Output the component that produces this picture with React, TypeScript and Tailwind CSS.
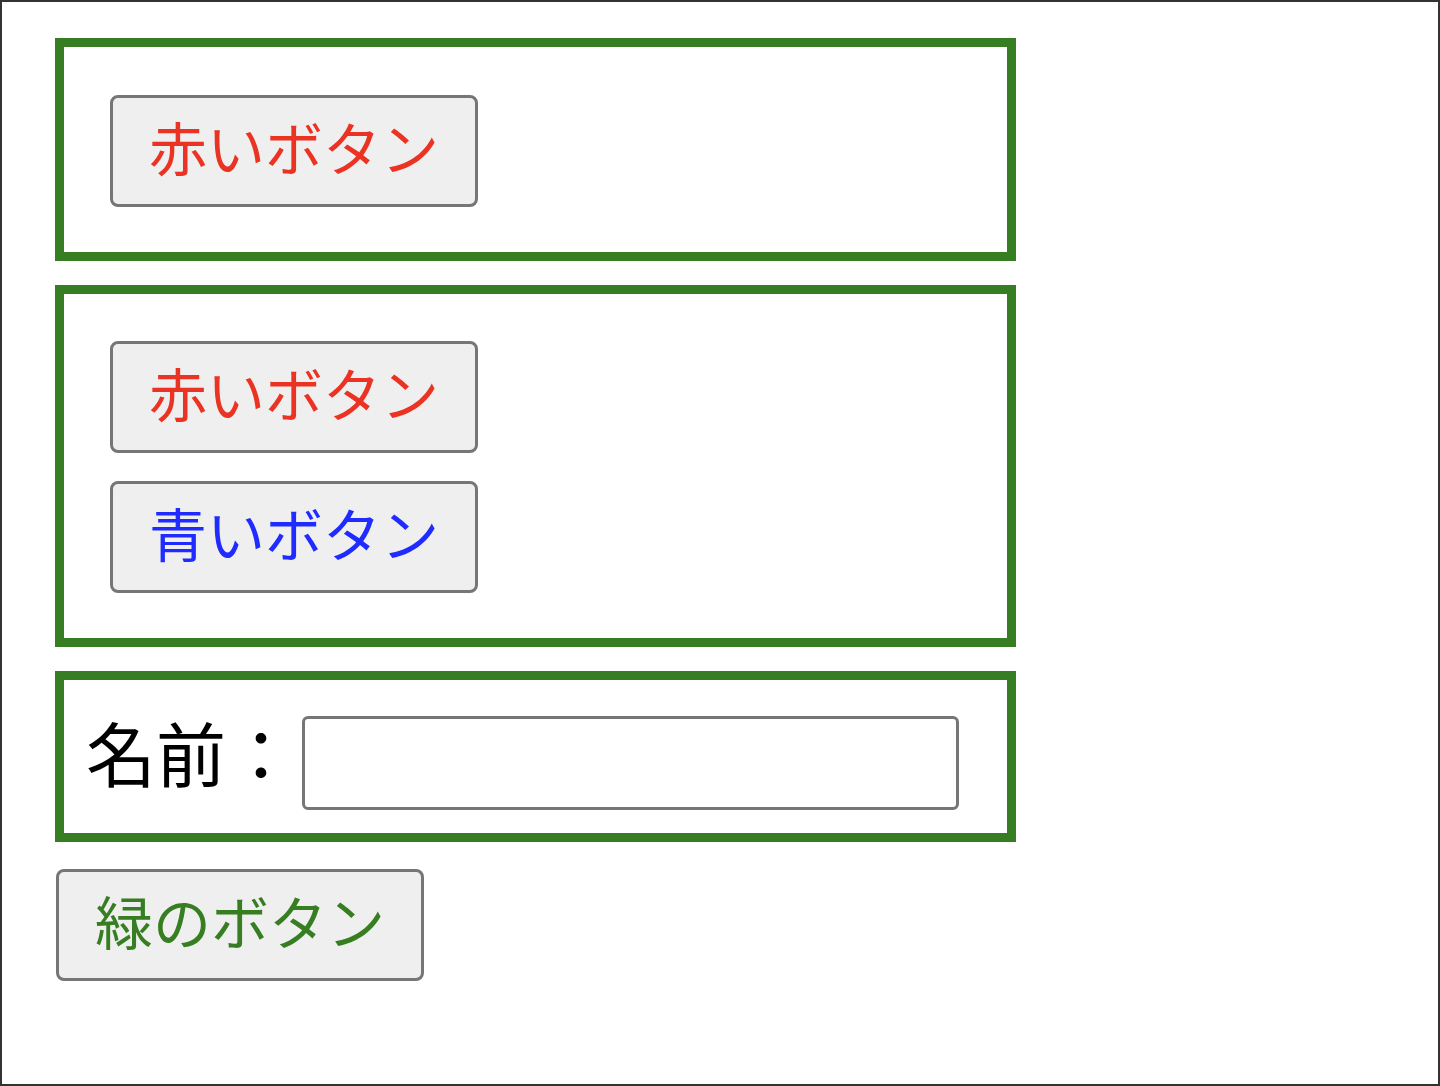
import React from "react";

const font = { fontFamily: '"Noto Sans CJK JP", "Noto Sans", sans-serif' };

function Btn({ color, children }: { color: string; children: React.ReactNode }) {
  return (
    <button
      type="button"
      className={`flex h-[112px] w-[368px] items-center justify-center rounded-[8px] border-[3px] border-[#767676] bg-[#efefef] pb-[10px] text-[58px] leading-none ${color}`}
    >
      {children}
    </button>
  );
}

export default function App() {
  return (
    <div
      className="box-border h-[1086px] w-[1440px] border-2 border-[#333333] bg-white pl-[53px] pt-[36px]"
      style={font}
    >
      <div className="flex w-[961px] flex-col gap-[24px]">
        <div className="border-[9px] border-[#377e22] pb-[45px] pl-[46px] pt-[48px]">
          <Btn color="text-[#eb3323]">赤いボタン</Btn>
        </div>
        <div className="flex flex-col gap-[28px] border-[9px] border-[#377e22] pb-[45px] pl-[46px] pt-[47px]">
          <Btn color="text-[#eb3323]">赤いボタン</Btn>
          <Btn color="text-[#1f2bff]">青いボタン</Btn>
        </div>
        <div className="flex items-start border-[9px] border-[#377e22] pb-[23px] pl-[22px] pt-[36px]">
          <label className="mt-[1px] text-[70px] leading-[70px] text-black">名前：</label>
          <input
            type="text"
            className="ml-[6px] h-[94px] w-[657px] rounded-[6px] border-[3px] border-[#767676] bg-white outline-none"
          />
        </div>
      </div>
      <div className="mt-[27px] pl-[1px]">
        <Btn color="text-[#377e22]">緑のボタン</Btn>
      </div>
    </div>
  );
}
